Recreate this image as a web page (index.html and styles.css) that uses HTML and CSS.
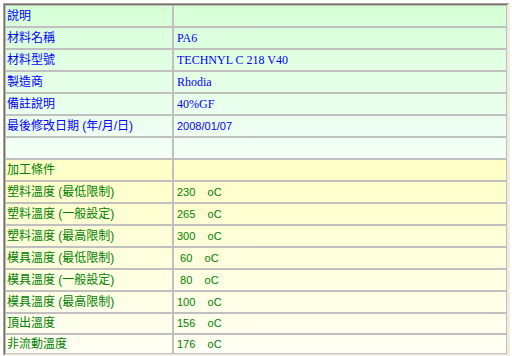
FILE: index.html
```html
<!DOCTYPE html>
<html>
<head>
<meta charset="utf-8">
<link rel="stylesheet" href="styles.css">
</head>
<body>
<div class="frame">
  <div class="inner">
    <div class="section info">
      <div class="cell label">說明</div><div class="cell value"></div>
      <div class="cell label">材料名稱</div><div class="cell value serif">PA6</div>
      <div class="cell label">材料型號</div><div class="cell value serif">TECHNYL C 218 V40</div>
      <div class="cell label">製造商</div><div class="cell value serif">Rhodia</div>
      <div class="cell label">備註說明</div><div class="cell value serif">40%GF</div>
      <div class="cell label">最後修改日期 (年/月/日)</div><div class="cell value sans">2008/01/07</div>
      <div class="cell label"></div><div class="cell value"></div>
    </div>
    <div class="section proc">
      <div class="cell label">加工條件</div><div class="cell value"></div>
      <div class="cell label">塑料溫度 (最低限制)</div><div class="cell value sans">230    oC</div>
      <div class="cell label">塑料溫度 (一般設定)</div><div class="cell value sans">265    oC</div>
      <div class="cell label">塑料溫度 (最高限制)</div><div class="cell value sans">300    oC</div>
      <div class="cell label">模具溫度 (最低限制)</div><div class="cell value sans"> 60    oC</div>
      <div class="cell label">模具溫度 (一般設定)</div><div class="cell value sans"> 80    oC</div>
      <div class="cell label">模具溫度 (最高限制)</div><div class="cell value sans">100    oC</div>
      <div class="cell label r15">頂出溫度</div><div class="cell value sans r15">156    oC</div>
      <div class="cell label r16">非流動溫度</div><div class="cell value sans r16">176    oC</div>
    </div>
  </div>
</div>
</body>
</html>
```

FILE: styles.css
```css
html, body {
  margin: 0;
  padding: 0;
  background: #ffffff;
}
body {
  padding: 3px 0 0 3px;
  font-family: "Liberation Sans", "Noto Sans CJK TC", sans-serif;
  font-size: 12px;
}
.frame {
  width: 504px;
  border-top: 1px solid #aca899;
  border-left: 1px solid #aca899;
  border-right: 2px solid #f1efe2;
  border-bottom: 1px solid #f1efe2;
}
.inner {
  border-top: 1px solid #716f64;
  border-left: 1px solid #716f64;
  border-right: 1px solid #ece9d8;
  border-bottom: 1px solid #ece9d8;
}
.section {
  display: grid;
  grid-template-columns: 168px 334px;
}
.info {
  background: linear-gradient(to bottom, #d6ffd6 0%, #f4fff8 100%);
  color: #0000ff;
}
.proc {
  background: linear-gradient(to bottom, #ffffc6 0%, #fffff4 100%);
  color: #008000;
}
.cell {
  box-sizing: border-box;
  height: 22px;
  border: 1px solid #c0c0c0;
  line-height: 20px;
  white-space: pre;
  overflow: hidden;
}
.label {
  padding-left: 1px;
}
.value {
  padding-left: 3px;
}
.serif {
  font-family: "Liberation Serif", "Noto Sans CJK TC", serif;
  font-size: 12px;
}
.sans {
  font-family: "Liberation Sans", sans-serif;
  font-size: 11px;
}
.r15 {
  height: 21px;
  line-height: 19px;
}
.r16 {
  height: 20px;
  line-height: 18px;
}
```
